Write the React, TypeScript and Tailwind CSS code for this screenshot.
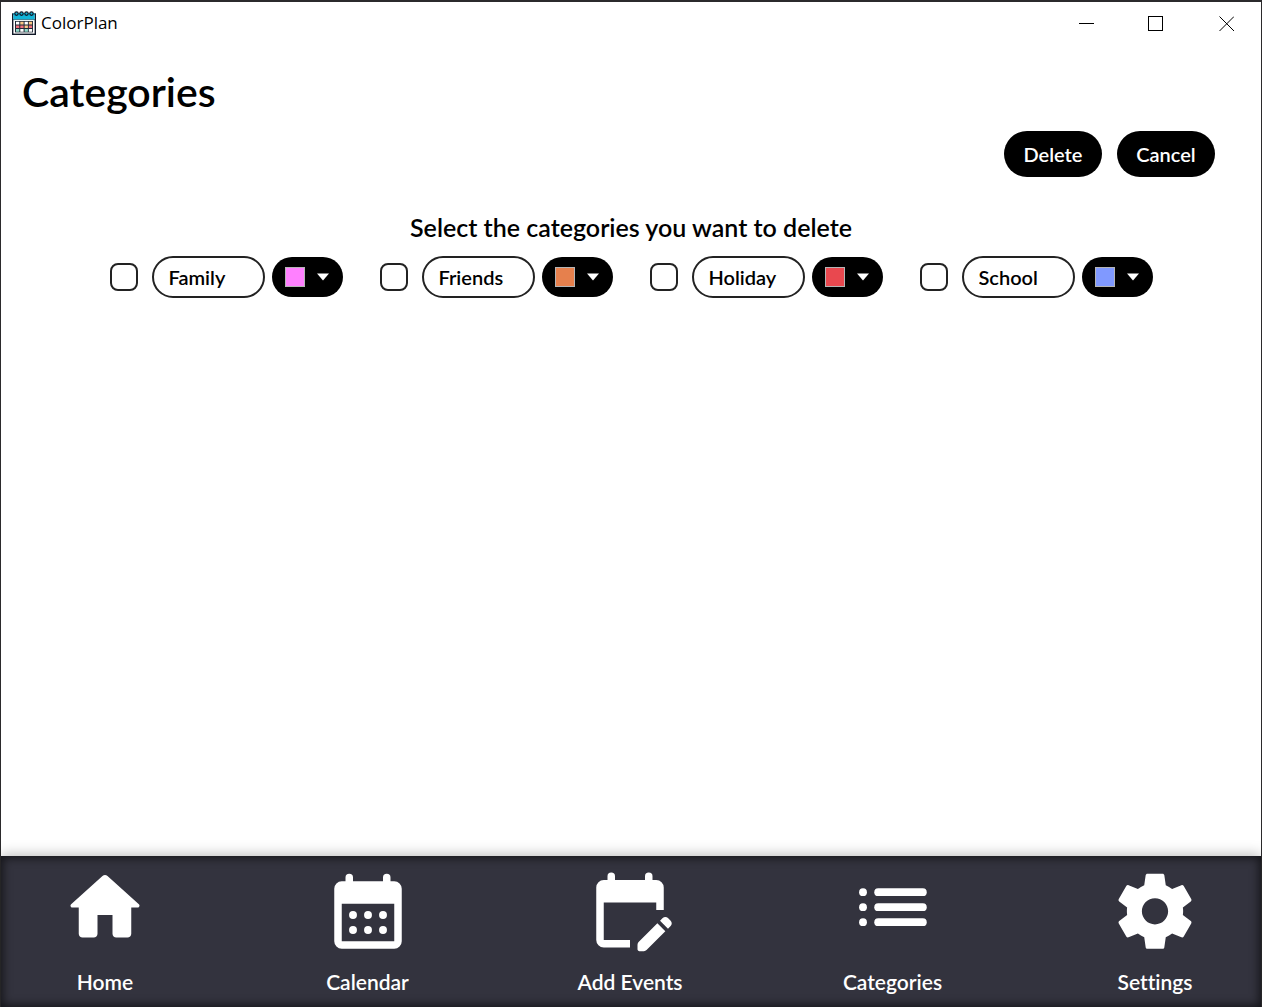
import type { ReactNode } from "react";

type Category = { name: string; swatch: string };

const categories: Category[] = [
  { name: "Family", swatch: "bg-[#ff80ff]" },
  { name: "Friends", swatch: "bg-[#e6804d]" },
  { name: "Holiday", swatch: "bg-[#e9484f]" },
  { name: "School", swatch: "bg-[#8099ff]" },
];

function AppIcon() {
  return (
    <svg viewBox="0 0 24 24" className="size-6" aria-hidden="true">
      <rect x="0.7" y="3" width="22.6" height="20.3" fill="#fff" stroke="#111827" strokeWidth="1.4" />
      <rect x="1.4" y="2" width="21.2" height="6.2" fill="#12b4d8" />
      <path d="M1 8.6h22" stroke="#0c5c74" strokeWidth="0.8" />
      <g fill="#12b4d8" stroke="#111827" strokeWidth="1.2">
        <circle cx="4.5" cy="2.6" r="1.7" />
        <circle cx="9.5" cy="2.6" r="1.7" />
        <circle cx="14.5" cy="2.6" r="1.7" />
        <circle cx="19.5" cy="2.6" r="1.7" />
      </g>
      <rect x="3" y="10" width="18" height="11.4" fill="#1f2937" />
      <path d="M4 10.800h3.300v2.700H4zM12.600 10.800h3.300v2.700h-3.300zM16.800 18h3.300v2.700h-3.300zM8.300 18h3.300v2.700H8.300z" fill="#fff" />
      <path d="M8.300 10.800h3.300v2.700H8.300zM16.800 10.800h3.300v2.700h-3.300zM12.600 14.400h3.300v2.700h-3.300z" fill="#fbc886" />
      <path d="M4 14.400h3.300v2.700H4zM8.300 14.400h3.300v2.700H8.300zM16.800 14.400h3.300v2.700h-3.300z" fill="#f0707c" />
      <path d="M4 18h3.300v2.700H4zM12.600 18h3.300v2.700h-3.300z" fill="#8fd9c8" />
    </svg>
  );
}

function TitleBar() {
  return (
    <header className="flex h-[42px] items-center justify-between pl-[11px]">
      <div className="flex items-center gap-[5px]">
        <AppIcon />
        <span className="font-['Open_Sans','Noto_Sans',sans-serif] text-[17px] leading-6 text-black">ColorPlan</span>
      </div>
      <div className="flex h-full">
        <button type="button" aria-label="Minimize" className="flex w-[70px] items-center justify-center">
          <svg viewBox="0 0 16 16" className="size-4" stroke="#000" fill="none" shapeRendering="crispEdges">
            <path d="M1 8.500h15" />
          </svg>
        </button>
        <button type="button" aria-label="Maximize" className="flex w-[70px] items-center justify-center">
          <svg viewBox="0 0 16 16" className="size-4" stroke="#000" fill="none" shapeRendering="crispEdges">
            <path d="M.5 1.500h14v14h-14z" />
          </svg>
        </button>
        <button type="button" aria-label="Close" className="flex w-[70px] items-center justify-center">
          <svg viewBox="0 0 16 16" className="size-4" stroke="#000" fill="none">
            <path d="M1.500 1.500L16 16M16 1.500L1.500 16" />
          </svg>
        </button>
      </div>
    </header>
  );
}

function CategoryItem({ name, swatch }: Category) {
  return (
    <li className="flex items-center">
      <input
        type="checkbox"
        aria-label={`Select ${name}`}
        className="size-7 appearance-none rounded-lg border-2 border-[#222] bg-white checked:bg-black"
      />
      <input
        type="text"
        defaultValue={name}
        aria-label={`${name} category name`}
        className="ml-[14px] h-[42px] w-[113px] rounded-full border-2 border-[#222] bg-white px-[15px] text-xl font-semibold text-black"
      />
      <button
        type="button"
        aria-label={`${name} colour`}
        aria-haspopup="menu"
        className="ml-[7px] flex h-10 w-[71px] items-center gap-[11px] rounded-full bg-black pl-[13px]"
      >
        <span className={`size-5 border border-[#b5b5b5] ${swatch}`} />
        <svg viewBox="0 0 14 8" className="h-2 w-[14px]" fill="#fff" aria-hidden="true">
          <path d="M1 .5h12L7 7.500z" />
        </svg>
      </button>
    </li>
  );
}

function NavItem({ label, viewBox, children }: { label: string; viewBox: string; children: ReactNode }) {
  return (
    <li>
      <a href="#" className="flex w-28 flex-col items-center">
        <svg viewBox={viewBox} className="size-[90px]" fill="#fff" aria-hidden="true">
          {children}
        </svg>
        <span className="mt-[14px] whitespace-nowrap text-[21px] leading-7 font-semibold text-white">{label}</span>
      </a>
    </li>
  );
}

function NavBar() {
  return (
    <nav className="relative bg-[#33333e] shadow-[0_-2px_12px_rgba(0,0,0,0.25),inset_0_0_10px_2px_rgba(0,0,0,0.6)]">
      <ul className="flex justify-between pt-2 pr-[50px] pb-[11px] pl-12">
        <NavItem label="Home" viewBox="0 0.4 24 24">
          <path d="M10 19v-5h4v5c0 .55.45 1 1 1h3c.55 0 1-.45 1-1v-7h1.700c.46 0 .68-.57.33-.87L12.670 3.600c-.38-.34-.96-.34-1.340 0l-8.360 7.530c-.34.300-.13.870.33.870H5v7c0 .55.45 1 1 1h3c.55 0 1-.45 1-1z" />
        </NavItem>
        <NavItem label="Calendar" viewBox="0 -0.600 24 24">
          <path
            fillRule="evenodd"
            d="M6 4V3a1 1 0 0 1 2 0v1h8V3a1 1 0 0 1 2 0v1h1a2 2 0 0 1 2 2v14a2 2 0 0 1-2 2H5a2 2 0 0 1-2-2V6a2 2 0 0 1 2-2zM5 10v10h14V10z"
          />
          <circle cx="8" cy="13" r="1.050" />
          <circle cx="12" cy="13" r="1.050" />
          <circle cx="16" cy="13" r="1.050" />
          <circle cx="8" cy="17" r="1.050" />
          <circle cx="12" cy="17" r="1.050" />
          <circle cx="16" cy="17" r="1.050" />
        </NavItem>
        <NavItem label="Add Events" viewBox="0 -0.250 24 24">
          <path d="M6 4V3a1 1 0 0 1 2 0v1h8V3a1 1 0 0 1 2 0v1h1a2 2 0 0 1 2 2v6h-2v-2H5v10h7v2H5a2 2 0 0 1-2-2V6a2 2 0 0 1 2-2z" />
          <path d="M22.130 16.990l.71-.71c.39-.39.39-1.020 0-1.410l-.71-.71c-.39-.39-1.020-.39-1.410 0l-.71.71 2.120 2.120zM21.420 17.700l-5.010 5.010c-.18.18-.44.29-.7.29H14.500c-.28 0-.5-.22-.5-.5v-1.210c0-.27.110-.52.290-.71l5.010-5.010 2.120 2.130z" />
        </NavItem>
        <NavItem label="Categories" viewBox="0 0.500 24 24">
          <circle cx="4" cy="8" r="1.050" />
          <circle cx="4" cy="12" r="1.050" />
          <circle cx="4" cy="16" r="1.050" />
          <rect x="7" y="6.950" width="14" height="2.100" rx="1.050" />
          <rect x="7" y="10.950" width="14" height="2.100" rx="1.050" />
          <rect x="7" y="14.950" width="14" height="2.100" rx="1.050" />
        </NavItem>
        <NavItem label="Settings" viewBox="0 -0.600 24 24">
          <path d="M19.43 12.98c.04-.32.07-.64.07-.98s-.03-.66-.07-.98l2.110-1.650c.19-.15.24-.42.12-.64l-2-3.460c-.12-.22-.39-.3-.61-.22l-2.490 1c-.52-.4-1.080-.73-1.690-.98l-.38-2.650C14.460 2.180 14.250 2 14 2h-4c-.25 0-.46.18-.49.42l-.38 2.650c-.61.25-1.170.59-1.690.98l-2.490-1c-.23-.09-.49 0-.61.22l-2 3.460c-.13.22-.07.49.12.64l2.110 1.650c-.04.32-.07.65-.07.98s.03.66.07.98l-2.110 1.650c-.19.15-.24.42-.12.64l2 3.460c.12.22.39.3.61.22l2.490-1c.52.4 1.080.73 1.690.98l.38 2.650c.03.24.24.42.49.42h4c.25 0 .46-.18.49-.42l.38-2.650c.61-.25 1.170-.59 1.690-.98l2.490 1c.23.09.49 0 .61-.22l2-3.460c.12-.22.07-.49-.12-.64l-2.110-1.650zM12 15.500c-1.930 0-3.500-1.570-3.500-3.500s1.570-3.500 3.500-3.500 3.500 1.570 3.500 3.500-1.570 3.500-3.500 3.500z" />
        </NavItem>
      </ul>
    </nav>
  );
}

export default function App() {
  return (
    <div className="flex min-h-screen flex-col border-x border-t-2 border-[#2b2a2c] bg-white font-['Lato',sans-serif] text-black [font-variant-ligatures:none]">
      <TitleBar />
      <main className="flex-1">
        <h1 className="pt-5 pl-[21px] text-[41px] leading-[56px] font-semibold">Categories</h1>
        <div className="mt-[11px] flex justify-end gap-[15px] pr-[46px] text-xl font-semibold text-white">
          <button type="button" className="h-[46px] w-[98px] rounded-full bg-black">
            Delete
          </button>
          <button type="button" className="h-[46px] w-[98px] rounded-full bg-black">
            Cancel
          </button>
        </div>
        <p className="mt-[34px] text-center text-[25px] leading-8 font-semibold">
          Select the categories you want to delete
        </p>
        <ul className="mt-[13px] flex flex-wrap justify-center gap-x-[37px] gap-y-4">
          {categories.map((category) => (
            <CategoryItem key={category.name} {...category} />
          ))}
        </ul>
      </main>
      <NavBar />
    </div>
  );
}
